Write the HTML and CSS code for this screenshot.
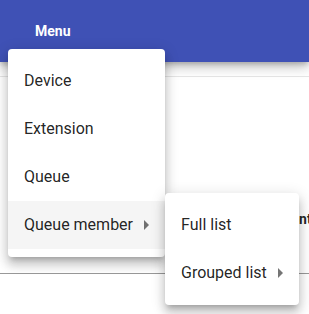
FILE: index.html
```html
<!DOCTYPE html>
<html lang="en">
<head>
    <meta charset="UTF-8">
    <meta name="viewport" content="width=device-width, initial-scale=1.0">
    <title>Menu</title>
    <link rel="stylesheet" href="styles.css">
</head>
<body>
    <header class="toolbar">
        <button class="menu-btn">Menu</button>
    </header>
    <div class="card">
        <div class="card-row">
            <span class="col-title">Content</span>
        </div>
    </div>
    <!-- main menu -->
    <div class="menu menu-main">
        <div class="menu-item">Device</div>
        <div class="menu-item">Extension</div>
        <div class="menu-item">Queue</div>
        <div class="menu-item has-sub active">Queue member</div>
    </div>
    <!-- submenu -->
    <div class="menu menu-sub">
        <div class="menu-item">Full list</div>
        <div class="menu-item has-sub">Grouped list</div>
    </div>
</body>
</html>
```

FILE: styles.css
```css
html, body{
    margin: 0;
    padding: 0;
    overflow: hidden;
    background: #fff;
    font-family: Roboto, "Noto Sans", sans-serif;
}
.toolbar{
    height: 62px;
    background-color: #3f51b5;
    display: flex;
    align-items: center;
    box-shadow: 0 3px 5px -1px rgba(0,0,0,0.2), 0 6px 10px 0 rgba(0,0,0,0.14), 0 1px 18px 0 rgba(0,0,0,0.12);
    position: relative;
    z-index: 2;
}
.menu-btn{
    background: none;
    border: none;
    color: #fff;
    font-family: Roboto, sans-serif;
    font-size: 14px;
    font-weight: bold;
    padding: 0 0 0 35px;
    height: 36px;
}
.card{
    margin-top: 14px;
    height: 196px;
    border-top: 1px solid #e6e6e6;
    border-bottom: 1px solid #999;
    box-shadow: 0 2px 2px 0 rgba(0,0,0,0.22);
    overflow: hidden;
}
.card-row{
    padding: 132px 0 0 282px;
    white-space: nowrap;
}
.col-title{
    font-size: 14px;
    line-height: 20px;
    font-weight: bold;
    color: rgba(0,0,0,0.87);
}
.menu{
    position: absolute;
    background: #fff;
    border-radius: 4px;
    padding: 8px 0;
    z-index: 10;
    box-shadow: 0 5px 5px -3px rgba(0,0,0,0.2), 0 8px 10px 1px rgba(0,0,0,0.14), 0 3px 14px 2px rgba(0,0,0,0.12);
}
.menu-main{
    left: 8px;
    top: 49px;
    width: 157px;
}
.menu-sub{
    left: 165px;
    top: 193px;
    width: 134px;
    z-index: 11;
}
.menu-item{
    height: 48px;
    line-height: 48px;
    padding: 0 16px;
    font-size: 16px;
    color: rgba(0,0,0,0.87);
    white-space: nowrap;
    position: relative;
}
.menu-item.active{
    background-color: #f5f5f5;
}
.menu-item.has-sub::after{
    content: "";
    position: absolute;
    right: 16px;
    top: 19px;
    border-left: 5px solid rgba(0,0,0,0.54);
    border-top: 5px solid transparent;
    border-bottom: 5px solid transparent;
}
```
